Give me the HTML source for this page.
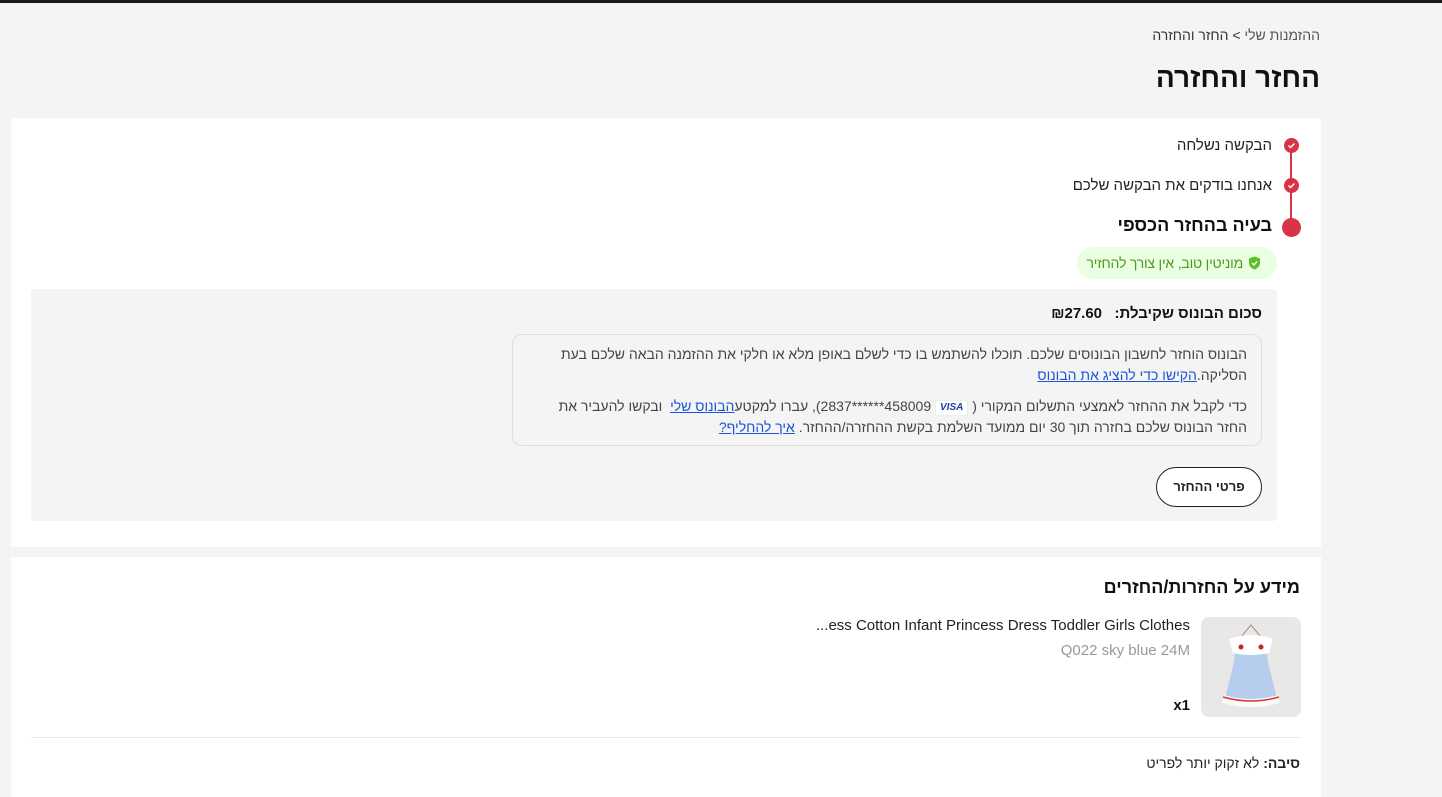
<!DOCTYPE html>
<html><head><meta charset="utf-8">
<style>
*{margin:0;padding:0;box-sizing:border-box}
body{width:1442px;height:782px;overflow:hidden;background:#f4f4f4;font-family:"Liberation Sans","Noto Sans CJK SC",sans-serif;color:#222;position:relative}
.a{position:absolute;white-space:nowrap}
.r{direction:rtl}
a{color:#1a55d6;text-decoration:underline}
</style></head><body>
<div class="a" style="left:0;top:0;width:1442px;height:3px;background:#191919"></div>
<div class="a r" style="right:122px;top:27px;font-size:14px;color:#333"><span style="color:#555">ההזמנות שלי</span> &gt; <span>החזר והחזרה</span></div>
<div class="a r" style="right:122px;top:62px;font-size:28px;font-weight:bold;color:#111">החזר והחזרה</div>

<div class="a" style="left:11px;top:118px;width:1310px;height:429px;background:#fff"></div>
<div class="a" style="left:1290px;top:146px;width:2px;height:82px;background:#d83347"></div>
<div class="a" style="left:1284px;top:138px;width:15px;height:15px;border-radius:50%;background:#d83347"></div>
<div class="a" style="left:1284px;top:178px;width:15px;height:15px;border-radius:50%;background:#d83347"></div>
<svg class="a" style="left:1284px;top:138px" width="15" height="15"><path d="M4.5 7.5l2 2 4-4" stroke="#fff" stroke-width="1.5" fill="none"/></svg>
<svg class="a" style="left:1284px;top:178px" width="15" height="15"><path d="M4.5 7.5l2 2 4-4" stroke="#fff" stroke-width="1.5" fill="none"/></svg>
<div class="a" style="left:1282px;top:218px;width:19px;height:19px;border-radius:50%;background:#d83347"></div>
<div class="a r" style="right:170px;top:137px;font-size:15px">הבקשה נשלחה</div>
<div class="a r" style="right:170px;top:177px;font-size:15px">אנחנו בודקים את הבקשה שלכם</div>
<div class="a r" style="right:170px;top:215px;font-size:18px;font-weight:bold;color:#111">בעיה בהחזר הכספי</div>
<div class="a r" style="left:1077px;top:247px;width:200px;height:32px;border-radius:16px;background:#eaffe2;font-size:14px;color:#4e9a1e;padding-right:16px;line-height:32px;overflow:hidden">
<svg style="vertical-align:-2px;margin-left:5px" width="13" height="14" viewBox="0 0 13 14"><path d="M6.5 0.5L12 2.5V7c0 3-2.5 5.5-5.5 6.5C3.5 12.5 1 10 1 7V2.5z" fill="#5cbf2a"/><path d="M4 7l2 2 3-3.5" stroke="#fff" stroke-width="1.4" fill="none"/></svg><span style="letter-spacing:-0.2px">מוניטין טוב, אין צורך להחזיר</span></div>

<div class="a" style="left:31px;top:289px;width:1246px;height:232px;background:#f4f4f4;border-radius:4px"></div>
<div class="a r" style="right:180px;top:305px;font-size:15px;font-weight:bold;color:#111">סכום הבונוס שקיבלת: &nbsp; ₪27.60</div>
<div class="a r" style="left:512px;top:334px;width:750px;height:112px;border:1px solid #ddd;border-radius:10px;padding:9px 14px 0 12px;font-size:14px;line-height:21px;color:#444;white-space:normal">
<div style="margin-bottom:10px">הבונוס הוחזר לחשבון הבונוסים שלכם. תוכלו להשתמש בו כדי לשלם באופן מלא או חלקי את ההזמנה הבאה שלכם בעת הסליקה.<a>הקישו כדי להציג את הבונוס</a></div>
<div>כדי לקבל את ההחזר לאמצעי התשלום המקורי ( <span style="display:inline-block;background:#fff;border:1px solid #eee;color:#1a3fa6;font-weight:bold;font-style:italic;font-size:10px;line-height:14px;padding:0 4px;vertical-align:1px">VISA</span> 458009******2837), עברו למקטע<a>הבונוס שלי</a> &nbsp;ובקשו להעביר את החזר הבונוס שלכם בחזרה תוך 30 יום ממועד השלמת בקשת ההחזרה/ההחזר. <a>איך להחליף?</a></div>
</div>
<div class="a" style="left:1156px;top:467px;width:106px;height:40px;border:1px solid #222;border-radius:20px;background:#fff;font-size:13px;font-weight:bold;text-align:center;line-height:38px;direction:rtl">פרטי ההחזר</div>

<div class="a" style="left:11px;top:557px;width:1310px;height:240px;background:#fff"></div>
<div class="a r" style="right:142px;top:577px;font-size:18px;font-weight:bold;color:#111">מידע על החזרות/החזרים</div>
<div class="a" style="left:1201px;top:617px;width:100px;height:100px;border-radius:8px;background:#e9e8e6;overflow:hidden">
<svg width="100" height="100"><path d="M50 8l-10 12h20z" stroke="#a88" fill="none"/><path d="M35 25q15-6 30 0l2 20 10 40q-27 8-54 0l10-40z" fill="#b6cdee"/><path d="M23 78q27 8 54 0l2 8q-29 8-58 0z" fill="#fafafa"/><path d="M22 80q28 8 56 0" stroke="#d33" stroke-width="1.5" fill="none"/><path d="M28 22q22-8 44 0l-4 14q-18 4-36 0z" fill="#fff"/><circle cx="40" cy="30" r="2.5" fill="#c22"/><circle cx="60" cy="30" r="2.5" fill="#c22"/></svg>
</div>
<div class="a" style="right:252px;top:617px;font-size:15px;color:#222">...ess Cotton Infant Princess Dress Toddler Girls Clothes</div>
<div class="a" style="right:252px;top:642px;font-size:15px;color:#999">Q022 sky blue 24M</div>
<div class="a" style="right:252px;top:697px;font-size:15px;font-weight:bold;color:#111">x1</div>
<div class="a" style="left:31px;top:737px;width:1270px;height:1px;background:#e8e8e8"></div>
<div class="a r" style="right:142px;top:755px;font-size:14px;color:#222"><b>סיבה:</b> לא זקוק יותר לפריט</div>
</body></html>
